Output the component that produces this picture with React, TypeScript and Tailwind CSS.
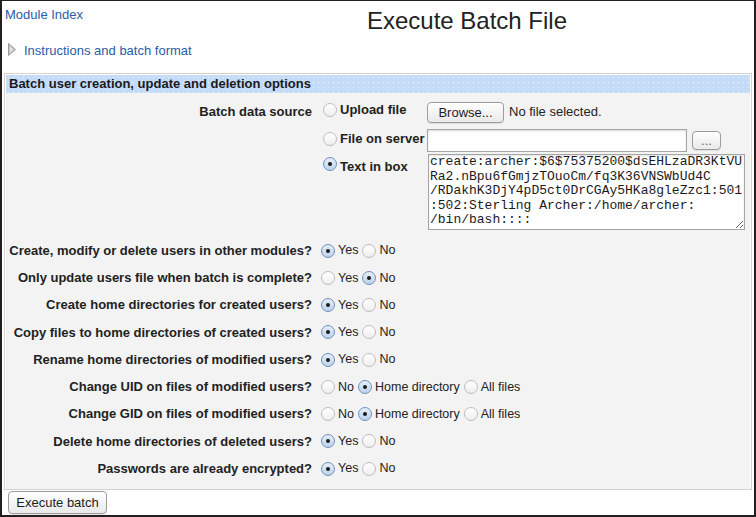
import React from 'react';

type Row = { label: string; opts: string[]; sel: number };

const rows: Row[] = [
  { label: 'Create, modify or delete users in other modules?', opts: ['Yes', 'No'], sel: 0 },
  { label: 'Only update users file when batch is complete?', opts: ['Yes', 'No'], sel: 1 },
  { label: 'Create home directories for created users?', opts: ['Yes', 'No'], sel: 0 },
  { label: 'Copy files to home directories of created users?', opts: ['Yes', 'No'], sel: 0 },
  { label: 'Rename home directories of modified users?', opts: ['Yes', 'No'], sel: 0 },
  { label: 'Change UID on files of modified users?', opts: ['No', 'Home directory', 'All files'], sel: 1 },
  { label: 'Change GID on files of modified users?', opts: ['No', 'Home directory', 'All files'], sel: 1 },
  { label: 'Delete home directories of deleted users?', opts: ['Yes', 'No'], sel: 0 },
  { label: 'Passwords are already encrypted?', opts: ['Yes', 'No'], sel: 0 },
];

const batchText = [
  'create:archer:$6$75375200$dsEHLzaDR3KtVU',
  'Ra2.nBpu6fGmjzTOuoCm/fq3K36VNSWbUd4C',
  '/RDakhK3DjY4pD5ct0DrCGAy5HKa8gleZzc1:501',
  ':502:Sterling Archer:/home/archer:',
  '/bin/bash::::',
].join('\n');

function Radio({ checked }: { checked?: boolean }) {
  return (
    <span
      className={`inline-flex h-[14px] w-[14px] shrink-0 items-center justify-center rounded-full border ${
        checked
          ? 'border-[#6f90bb] bg-[linear-gradient(180deg,#e6eef9,#bcd2ec)]'
          : 'border-[#bdbdbd] bg-[linear-gradient(180deg,#ffffff,#eeeeee)]'
      }`}
    >
      {checked && <span className="h-[4px] w-[4px] rounded-full bg-[#1c1c1c]" />}
    </span>
  );
}

function MacButton({ children, className }: { children: React.ReactNode; className: string }) {
  return (
    <button
      className={`flex items-center justify-center rounded-[4px] border border-[#9c9c9c] bg-[linear-gradient(180deg,#ffffff,#e9e9e9)] text-[13px] text-[#1d1d1d] shadow-[0_1px_0_rgba(0,0,0,0.08)] ${className}`}
    >
      {children}
    </button>
  );
}

export default function App() {
  return (
    <div className="h-[517px] w-[756px] overflow-hidden border-x-2 border-b-2 border-t border-[#231f20] bg-white font-['Liberation_Sans',Arial,sans-serif] text-[13px] text-[#222]">
      <div className="flex h-[38px]">
        <div className="w-[178px] pl-[3px] pt-[4px]">
          <a href="#" className="text-[13px] text-[#2a5ca6]">
            Module Index
          </a>
        </div>
        <h1 className="flex-1 pt-[6px] text-center text-[24px] leading-[28px] text-[#222]">Execute Batch File</h1>
      </div>

      <div className="flex h-[24px] items-center pl-[6px]">
        <svg width="8" height="13" viewBox="0 0 8 13" className="mt-[-4px]">
          <polygon points="0.5,0.5 7.5,6.5 0.5,12.5" fill="#c9c9c9" stroke="#9a9a9a" strokeWidth="1" />
          <polygon points="2,4 5,6.5 2,9" fill="#e8e8e8" />
        </svg>
        <a href="#" className="ml-[8px] text-[13px] text-[#2a5ca6]">
          Instructions and batch format
        </a>
      </div>

      <div className="ml-[2px] mr-[2px] mt-[10px] h-[417px] border border-[#d6d2cb] bg-white p-px">
        <div className="flex h-[18px] items-center bg-[#c5dcf8] bg-[radial-gradient(circle,rgba(255,255,255,0.7)_0.6px,transparent_1px)] bg-[length:5px_5px] pl-[3px] text-[13px] font-bold text-[#1a1a1a]">
          Batch user creation, update and deletion options
        </div>

        <div className="h-[396px] bg-[#f3f3f3] pt-[4px]">
          <div className="flex pb-[7px]">
            <div className="w-[306px] pt-[5px] text-right font-bold">Batch data source</div>
            <div className="ml-[11px] grid grid-cols-[104px_auto] font-bold">
              <div className="flex h-[26px] items-center gap-[3px]">
                <Radio />
                <span>Upload file</span>
              </div>
              <div className="flex h-[26px] items-center">
                <MacButton className="mt-[5px] h-[21px] w-[77px] font-normal">Browse...</MacButton>
                <span className="ml-[5px] mt-[3px] text-[13px] font-normal">No file selected.</span>
              </div>

              <div className="flex h-[31px] items-center gap-[3px]">
                <Radio />
                <span>File on server</span>
              </div>
              <div className="flex h-[31px] items-center">
                <input
                  type="text"
                  className="mt-[4px] h-[23px] w-[260px] border border-[#a5a5a5] bg-white shadow-[inset_0_1px_2px_rgba(0,0,0,0.15)] outline-none"
                />
                <MacButton className="ml-[5px] mt-[4px] h-[19px] w-[29px] text-[11px] font-normal text-[#666]">...</MacButton>
              </div>

              <div className="flex items-start gap-[3px] pt-[3px]">
                <Radio checked />
                <span>Text in box</span>
              </div>
              <div className="flex">
                <textarea
                  defaultValue={batchText}
                  spellCheck={false}
                  wrap="off"
                  className="ml-[1px] h-[76px] w-[317px] resize overflow-hidden whitespace-pre border border-[#a5a5a5] bg-white py-0 pl-[1px] pr-0 font-['Liberation_Mono','Courier_New',monospace] text-[13px] leading-[14.6px] font-normal text-[#1a1a1a] shadow-[inset_0_1px_2px_rgba(0,0,0,0.12)] outline-none"
                />
              </div>
            </div>
          </div>

          {rows.map((r) => (
            <div key={r.label} className="flex h-[27.25px] items-center">
              <div className="w-[306px] text-right font-bold">{r.label}</div>
              <div className="ml-[9px] flex items-center text-[12.5px]">
                {r.opts.map((o, i) => (
                  <label key={o} className="mr-[4px] flex items-center gap-[3px]">
                    <Radio checked={i === r.sel} />
                    <span>{o}</span>
                  </label>
                ))}
              </div>
            </div>
          ))}
        </div>
      </div>

      <div className="pl-[6px] pt-[1px]">
        <MacButton className="h-[23px] w-[99px]">Execute batch</MacButton>
      </div>
    </div>
  );
}
